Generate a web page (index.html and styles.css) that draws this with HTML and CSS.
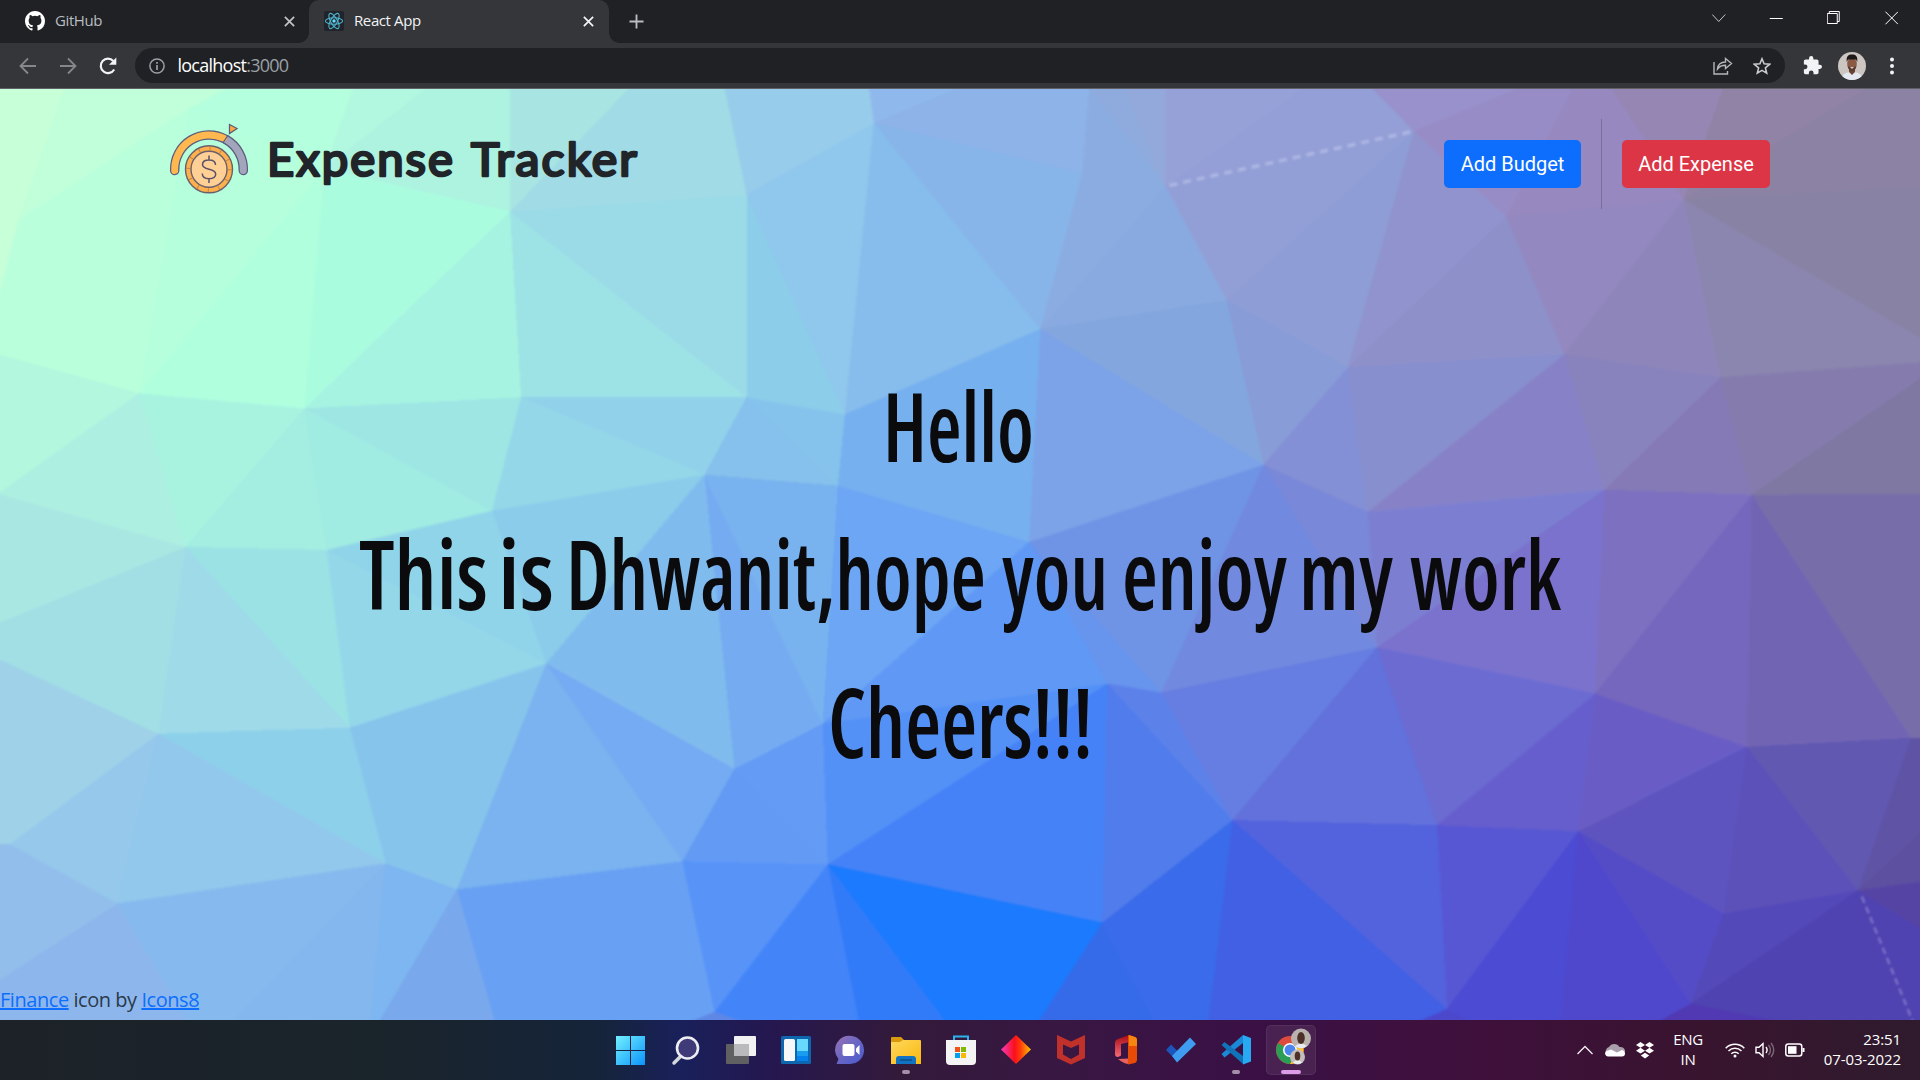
FILE: index.html
```html
<!DOCTYPE html>
<html lang="en">
<head>
<meta charset="utf-8">
<title>React App</title>
<link rel="stylesheet" href="styles.css">
</head>
<body>
<div class="screen">
  <header class="tabs">
    <div class="tab">
      <svg class="fav" viewBox="0 0 16 16"><path fill="#fff" d="M8 0C3.58 0 0 3.58 0 8c0 3.54 2.29 6.53 5.47 7.59.4.07.55-.17.55-.38v-1.49c-2.01.37-2.53-.49-2.69-.94-.09-.23-.48-.94-.82-1.13-.28-.15-.68-.52-.01-.53.63-.01 1.08.58 1.23.82.72 1.21 1.87.87 2.33.66.07-.52.28-.87.51-1.07-1.78-.2-3.64-.89-3.64-3.95 0-.87.31-1.59.82-2.15-.08-.2-.36-1.02.08-2.12 0 0 .67-.21 2.2.82a7.6 7.6 0 0 1 4 0c1.53-1.04 2.2-.82 2.2-.82.44 1.1.16 1.92.08 2.12.51.56.82 1.27.82 2.15 0 3.07-1.87 3.75-3.65 3.95.29.25.54.73.54 1.48v2.2c0 .21.15.46.55.38A8 8 0 0 0 16 8c0-4.42-3.58-8-8-8z"/></svg>
      <span class="tab-title">GitHub</span>
      <svg class="x dim" viewBox="0 0 10 10"><path d="M.8.8l8.4 8.4M9.2.8L.8 9.2"/></svg>
    </div>
    <div class="tab active">
      <svg class="fav" viewBox="0 0 20 20"><rect width="20" height="20" rx="2" fill="#20232a"/><g fill="none" stroke="#4fb3cd" stroke-width="1.1"><ellipse cx="10" cy="10" rx="8.6" ry="3.3"/><ellipse cx="10" cy="10" rx="8.6" ry="3.3" transform="rotate(60 10 10)"/><ellipse cx="10" cy="10" rx="8.6" ry="3.3" transform="rotate(120 10 10)"/></g><circle cx="10" cy="10" r="1.7" fill="#61dafb"/></svg>
      <span class="tab-title">React App</span>
      <svg class="x" viewBox="0 0 10 10"><path d="M.8.8l8.4 8.4M9.2.8L.8 9.2"/></svg>
    </div>
    <svg class="plus" viewBox="0 0 16 16"><path d="M8 .5v15M.5 8h15"/></svg>
    <div class="win">
      <svg viewBox="0 0 14 14"><path stroke="#c4c6ca" d="M.5 3.5l6.5 7 6.5-7"/></svg>
      <svg viewBox="0 0 14 14"><path d="M0 7.5h13"/></svg>
      <svg viewBox="0 0 14 14"><path d="M.5 2.5h10v10H.5zM2.5 2.5v-2h10v10h-2"/></svg>
      <svg viewBox="0 0 14 14"><path d="M.7.7l12.6 12.6M13.300.7L.7 13.300"/></svg>
    </div>
  </header>

  <nav class="toolbar">
    <div class="cell"><svg width="18" height="18" viewBox="0 0 18 18" class="ln" stroke="#85878a"><path d="M17 9H2M9 1.500L1.500 9 9 16.500"/></svg></div>
    <div class="cell"><svg width="18" height="18" viewBox="0 0 18 18" class="ln" stroke="#85878a"><path d="M1 9h15M9 1.500L16.500 9 9 16.500"/></svg></div>
    <div class="cell"><svg width="18" height="18" viewBox="0 0 18 18"><path d="M15.200 12.500A7.200 7.200 0 1 1 14.300 4" fill="none" stroke="#f1f3f4" stroke-width="2.200"/><path d="M17.300.5v7.300H10z" fill="#f1f3f4"/></svg></div>
    <div class="omni">
      <svg width="16" height="16" viewBox="0 0 16 16"><circle cx="8" cy="8" r="7.100" fill="none" stroke="#9aa0a6" stroke-width="1.500"/><path d="M8 7v5M8 4v1.700" stroke="#9aa0a6" stroke-width="1.700"/></svg>
      <span class="url">localhost<i>:3000</i></span>
      <svg class="share" width="20" height="18" viewBox="0 0 20 18" fill="none" stroke="#b4b6b9" stroke-width="1.400"><path d="M1 5v12h13.500v-3M4.500 12C5 7.500 8 5 12.500 5V1.500L18.500 6.500l-6 5V8.300C9 8.300 6.500 9.300 4.500 12z"/></svg>
      <svg width="18" height="18" viewBox="0 0 18 18" fill="none" stroke="#c8cacd" stroke-width="1.600"><path d="M9 1.800l2.100 5 5.500.5-4.200 3.600 1.300 5.300L9 13.400l-4.700 2.800 1.300-5.300L1.400 7.300l5.500-.5z"/></svg>
    </div>
    <div class="cell ext"><svg width="19" height="19" viewBox="1 1 22 22"><path fill="#f1f3f4" d="M20.500 11H19V7c0-1.100-.9-2-2-2h-4V3.500a2.500 2.500 0 0 0-5 0V5H4c-1.100 0-2 .9-2 2v3.800h1.500a2.700 2.700 0 0 1 0 5.400H2V20c0 1.100.9 2 2 2h3.800v-1.500a2.700 2.700 0 0 1 5.400 0V22H17c1.100 0 2-.9 2-2v-4h1.500a2.500 2.500 0 0 0 0-5z"/></svg></div>
    <div class="cell"><svg width="28" height="28" viewBox="0 0 28 28"><defs><clipPath id="av"><circle cx="14" cy="14" r="14"/></clipPath></defs><g clip-path="url(#av)"><rect width="28" height="28" fill="#cdc5c1"/><path d="M3 28c1-6 5-8 11-8s10 2 11 8z" fill="#e4e8f1"/><path d="M11 16h6v4l-3 3-3-3z" fill="#6b4434"/><ellipse cx="14" cy="12" rx="4.800" ry="6.500" fill="#8a5a45"/><path d="M8.800 10C8 4 10.500 2.500 14 2.500s6 1.500 5.200 7.500L18 7.500h-8z" fill="#1d1717"/><path d="M9.500 14c.8 3 2 5 4.500 5s3.700-2 4.500-5l-2 1h-5z" fill="#5a3a2e"/><path d="M12 15.300h4l-2 1.500z" fill="#fff"/></g></svg></div>
    <div class="cell"><svg width="4" height="18" viewBox="0 0 4 18" fill="#f1f3f4"><circle cx="2" cy="2.500" r="2"/><circle cx="2" cy="9" r="2"/><circle cx="2" cy="15.500" r="2"/></svg></div>
  </nav>

  <main class="page">
    <svg class="lowpoly" viewBox="0 89 1920 931" preserveAspectRatio="none">
      <polygon points="0,89 67,89 21,221 0,300" fill="#c6ffd8"/>
      <polygon points="67,89 230,89 190,111 21,221" fill="#c0ffda"/>
      <polygon points="21,221 190,111 141,394 0,355 0,300" fill="#b9ffdb"/>
      <polygon points="230,89 355,89 326,170 190,111" fill="#b4ffdd"/>
      <polygon points="190,111 326,170 141,394" fill="#b6ffdc"/>
      <polygon points="326,170 306,409 141,394" fill="#b0ffdd"/>
      <polygon points="326,170 511,213 306,409" fill="#aafcdf"/>
      <polygon points="511,213 522,398 306,409" fill="#a6f3e1"/>
      <polygon points="355,89 429,89 326,170" fill="#b2f7df"/>
      <polygon points="429,89 511,89 511,213 326,170" fill="#adf3e0"/>
      <polygon points="511,89 631,89 511,213" fill="#a8e5e2"/>
      <polygon points="631,89 725,89 747,196 511,213" fill="#a1dbe6"/>
      <polygon points="511,213 747,196 747,398" fill="#9bdbe7"/>
      <polygon points="511,213 747,398 522,398" fill="#9de3e6"/>
      <polygon points="725,89 869,89 874,125 747,196" fill="#97cceb"/>
      <polygon points="747,196 874,125 845,415" fill="#90c7ec"/>
      <polygon points="747,196 845,415 747,398" fill="#8ccdea"/>
      <polygon points="869,89 960,89 874,125" fill="#8fb9ec"/>
      <polygon points="874,125 960,89 1089,89 1082,175" fill="#8db3e8"/>
      <polygon points="874,125 1040,330 845,415" fill="#86bdec"/>
      <polygon points="874,125 1082,175 1040,330" fill="#87b5ea"/>
      <polygon points="1089,89 1165,188 1040,330 1082,175" fill="#8bace1"/>
      <polygon points="1089,89 1124,89 1165,188" fill="#8fabdd"/>
      <polygon points="1124,89 1165,89 1165,188" fill="#93a9db"/>
      <polygon points="1165,89 1303,89 1165,188" fill="#96a2d7"/>
      <polygon points="1303,89 1370,89 1413,133 1165,188" fill="#949fd7"/>
      <polygon points="1165,188 1413,133 1226,301" fill="#929fd6"/>
      <polygon points="1165,188 1226,301 1040,330" fill="#89aae0"/>
      <polygon points="1370,89 1520,89 1413,133" fill="#9891cb"/>
      <polygon points="1520,89 1572,89 1505,218 1413,133" fill="#978cc6"/>
      <polygon points="1413,133 1505,218 1347,368" fill="#9093cd"/>
      <polygon points="1413,133 1347,368 1226,301" fill="#8e9dd5"/>
      <polygon points="1572,89 1609,89 1682,201 1505,218" fill="#9788bf"/>
      <polygon points="1609,89 1722,89 1682,201" fill="#9586b4"/>
      <polygon points="1722,89 1866,89 1682,201" fill="#9183a5"/>
      <polygon points="1866,89 1920,89 1920,188 1682,201" fill="#8c82a3"/>
      <polygon points="1682,201 1920,188 1920,340" fill="#8883a4"/>
      <polygon points="1682,201 1920,340 1920,365 1719,378" fill="#8a86af"/>
      <polygon points="1682,201 1719,378 1563,355" fill="#8e86ba"/>
      <polygon points="1505,218 1682,201 1563,355" fill="#9388c0"/>
      <polygon points="1505,218 1563,355 1347,368" fill="#8e90ca"/>
      <polygon points="1040,330 1226,301 1263,465" fill="#83a6de"/>
      <polygon points="1226,301 1347,368 1263,465" fill="#889cd8"/>
      <polygon points="1040,330 1263,465 1029,542" fill="#7ca3e8"/>
      <polygon points="1347,368 1367,512 1263,465" fill="#8490d5"/>
      <polygon points="1347,368 1563,355 1367,512" fill="#878fce"/>
      <polygon points="1563,355 1603,490 1367,512" fill="#8782c8"/>
      <polygon points="1563,355 1719,378 1603,490" fill="#8883bd"/>
      <polygon points="1719,378 1750,495 1603,490" fill="#857ab6"/>
      <polygon points="1719,378 1920,363 1920,378 1750,495" fill="#857cad"/>
      <polygon points="1920,378 1920,494 1750,495" fill="#7e78a3"/>
      <polygon points="845,415 1040,330 1029,542 838,486" fill="#77b0ef"/>
      <polygon points="0,355 141,394 0,494" fill="#b2f7de"/>
      <polygon points="141,394 187,547 0,494" fill="#adefe1"/>
      <polygon points="141,394 306,409 187,547" fill="#a8f3e0"/>
      <polygon points="306,409 328,550 187,547" fill="#a3ede1"/>
      <polygon points="306,409 493,511 328,550" fill="#a0ebe2"/>
      <polygon points="306,409 522,398 493,511" fill="#9de6e4"/>
      <polygon points="522,398 747,398 705,475" fill="#91d2ea"/>
      <polygon points="522,398 705,475 493,511" fill="#94d7e8"/>
      <polygon points="747,398 845,415 838,486" fill="#86c3ec"/>
      <polygon points="747,398 838,486 705,475" fill="#86c0ec"/>
      <polygon points="0,494 187,547 0,623" fill="#a9e7e3"/>
      <polygon points="187,547 160,733 0,658 0,623" fill="#a2dfe5"/>
      <polygon points="187,547 351,727 160,733" fill="#9edae8"/>
      <polygon points="187,547 328,550 351,727" fill="#9be2e5"/>
      <polygon points="328,550 547,663 351,727" fill="#93d7e9"/>
      <polygon points="328,550 493,511 547,663" fill="#90d4ea"/>
      <polygon points="493,511 705,475 547,663" fill="#8bccea"/>
      <polygon points="705,475 735,768 547,663" fill="#80bbee"/>
      <polygon points="705,475 823,723 735,768" fill="#75acf1"/>
      <polygon points="705,475 838,486 823,723" fill="#79b3ef"/>
      <polygon points="838,486 1029,542 823,723" fill="#6ca6f4"/>
      <polygon points="1029,542 1107,683 823,723" fill="#6098f5"/>
      <polygon points="0,658 160,733 12,843 0,843" fill="#9fd2e8"/>
      <polygon points="160,733 119,902 12,843" fill="#95c8eb"/>
      <polygon points="160,733 387,862 119,902" fill="#92c8ec"/>
      <polygon points="160,733 351,727 387,862" fill="#8dd0ea"/>
      <polygon points="351,727 547,663 458,888 387,862" fill="#87c4ec"/>
      <polygon points="547,663 683,860 458,888" fill="#7ab3ef"/>
      <polygon points="547,663 735,768 683,860" fill="#74abf2"/>
      <polygon points="735,768 823,723 828,863" fill="#649bf5"/>
      <polygon points="735,768 828,863 683,860" fill="#629af4"/>
      <polygon points="823,723 1107,683 828,863" fill="#5391f7"/>
      <polygon points="0,843 12,843 119,902 0,979" fill="#92beeb"/>
      <polygon points="0,979 119,902 190,1020 0,1020" fill="#8db7ec"/>
      <polygon points="119,902 387,862 233,1020 190,1020" fill="#86b9ee"/>
      <polygon points="387,862 372,1020 233,1020" fill="#83b7ed"/>
      <polygon points="387,862 458,888 380,1020 372,1020" fill="#7db6f0"/>
      <polygon points="458,888 496,1020 380,1020" fill="#79a9ec"/>
      <polygon points="458,888 683,860 715,1010 700,1020 496,1020" fill="#68a0f4"/>
      <polygon points="683,860 828,863 715,1010" fill="#5893f8"/>
      <polygon points="828,863 859,1020 744,1020 715,1010" fill="#4385f8"/>
      <polygon points="828,863 946,1020 859,1020" fill="#327bf8"/>
      <polygon points="828,863 1102,921 1038,1020 946,1020" fill="#1b7afd"/>
      <polygon points="828,863 1107,683 1102,921" fill="#4582f7"/>
      <polygon points="1107,683 1232,819 1102,921" fill="#517ceb"/>
      <polygon points="1107,683 1161,692 1232,819" fill="#5c82ea"/>
      <polygon points="1029,542 1161,692 1107,683" fill="#6794ec"/>
      <polygon points="1029,542 1263,465 1161,692" fill="#6f94e5"/>
      <polygon points="1263,465 1376,647 1161,692" fill="#7189df"/>
      <polygon points="1263,465 1367,512 1376,647" fill="#7988d8"/>
      <polygon points="1367,512 1603,490 1376,647" fill="#7c7fd1"/>
      <polygon points="1603,490 1594,693 1376,647" fill="#7a72cd"/>
      <polygon points="1603,490 1750,495 1594,693" fill="#7d70c0"/>
      <polygon points="1750,495 1745,746 1594,693" fill="#7567bd"/>
      <polygon points="1750,495 1909,737 1745,746" fill="#7165b3"/>
      <polygon points="1750,495 1920,494 1920,737 1909,737" fill="#776ea9"/>
      <polygon points="1161,692 1376,647 1232,819" fill="#667de1"/>
      <polygon points="1376,647 1436,824 1232,819" fill="#6271db"/>
      <polygon points="1376,647 1594,693 1436,824" fill="#6b6bd2"/>
      <polygon points="1594,693 1577,830 1436,824" fill="#665ecc"/>
      <polygon points="1594,693 1745,746 1577,830" fill="#695dc5"/>
      <polygon points="1745,746 1722,912 1577,830" fill="#5e54c0"/>
      <polygon points="1745,746 1856,889 1722,912" fill="#5c50b9"/>
      <polygon points="1745,746 1909,737 1856,889" fill="#6158b2"/>
      <polygon points="1909,737 1920,737 1920,830 1856,889" fill="#5f53a5"/>
      <polygon points="1920,830 1920,880 1856,889" fill="#5d50a0"/>
      <polygon points="1856,889 1920,880 1920,928" fill="#5644a5"/>
      <polygon points="1856,889 1920,928 1920,1020 1689,1020 1689,1002" fill="#4f42b1"/>
      <polygon points="1722,912 1856,889 1689,1002" fill="#5449b9"/>
      <polygon points="1577,830 1722,912 1689,1002" fill="#544cc6"/>
      <polygon points="1577,830 1689,1002 1660,1020 1559,1020" fill="#4f48cd"/>
      <polygon points="1577,830 1559,1020 1460,1020 1446,1007" fill="#4b4bd3"/>
      <polygon points="1436,824 1577,830 1446,1007" fill="#5757d4"/>
      <polygon points="1232,819 1436,824 1446,1007" fill="#5363dd"/>
      <polygon points="1232,819 1446,1007 1425,1020 1208,1020" fill="#4160e4"/>
      <polygon points="1232,819 1208,1020 1155,1020 1102,921" fill="#3a6bea"/>
      <polygon points="1102,921 1155,1020 1038,1020" fill="#356be9"/>
      <polygon points="715,1010 744,1020 690,1020" fill="#5f87e5"/>
      <polygon points="1446,1007 1470,1020 1416,1020" fill="#4b48cc"/>
      <polygon points="1689,1002 1780,1020 1656,1020" fill="#5039b2"/>
      <path class="dash" d="M1169 187L1413 133" stroke-dasharray="8 6"/>
      <path class="dash thin" d="M1860 895L1911 1020" stroke-dasharray="7 4"/>
    </svg>

    <div class="head">
      <svg class="logo" viewBox="168 120 84 78">
        <g fill="none" stroke-linecap="round"><path d="M174.700 170.500A34.300 34.300 0 0 1 226 139.500" stroke="#5c5c7c" stroke-width="9.500"/><path d="M226 139.500A34.300 34.300 0 0 1 243.300 170.500" stroke="#5c5c7c" stroke-width="9.500"/><path d="M226 139.500A34.300 34.300 0 0 1 243.300 170.500" stroke="#a3a5bd" stroke-width="7"/><path d="M174.700 170.500A34.300 34.300 0 0 1 223.500 138.200" stroke="#ffb74f" stroke-width="7"/></g>
        <path d="M227.500 136l-4 6" stroke="#5c5c7c" stroke-width="1.300"/>
        <path d="M229.500 124.500v9l7.500-5z" fill="#ffa940" stroke="#5c5c7c" stroke-width="1.300"/>
        <circle cx="209" cy="169.300" r="23.500" fill="#fdb04b" stroke="#6b5f6d" stroke-width="1.400"/>
        <circle cx="209" cy="169.300" r="20.800" fill="none" stroke="#a5764f" stroke-width="4" stroke-dasharray="1 9.890" opacity=".7"/>
        <circle cx="209" cy="169.300" r="18" fill="#ffd096" stroke="#6b5f6d" stroke-width="1.400"/>
        <path d="M209 155.500v4.500M209 178.500v4.500M215.500 165c0-3-2.500-5-6.500-5s-6.500 1.800-6.500 4.600c0 6.200 13.200 3.200 13.200 9.400 0 2.800-2.700 4.700-6.700 4.700s-6.700-2-6.700-5.200" fill="none" stroke="#5a5165" stroke-width="1.500"/>
      </svg>
      <svg class="brand" viewBox="0 -20 380 90"><text y="37"><tspan x="1" textLength="188" lengthAdjust="spacingAndGlyphs">Expense</tspan> <tspan x="205" textLength="168" lengthAdjust="spacingAndGlyphs">Tracker</tspan></text></svg>
      <button class="btn blue">Add Budget</button>
      <span class="vr"></span>
      <button class="btn red">Add Expense</button>
    </div>

    <svg class="hero" viewBox="0 -20 1220 480">
      <text x="533" y="91.500" textLength="151" lengthAdjust="spacingAndGlyphs">Hello</text>
      <text y="239.500"><tspan x="9" textLength="129" lengthAdjust="spacingAndGlyphs">This</tspan> <tspan x="148" textLength="56" lengthAdjust="spacingAndGlyphs">is</tspan> <tspan x="216" textLength="420" lengthAdjust="spacingAndGlyphs">Dhwanit,hope</tspan> <tspan x="652" textLength="106" lengthAdjust="spacingAndGlyphs">you</tspan> <tspan x="772" textLength="165" lengthAdjust="spacingAndGlyphs">enjoy</tspan> <tspan x="949" textLength="94" lengthAdjust="spacingAndGlyphs">my</tspan> <tspan x="1060" textLength="151" lengthAdjust="spacingAndGlyphs">work</tspan></text>
      <text x="478" y="387.500" textLength="265" lengthAdjust="spacingAndGlyphs">Cheers!!!</text>
    </svg>

    <p class="credit"><a>Finance</a> icon by <a>Icons8</a></p>
  </main>

  <footer class="taskbar">
    <div class="apps">
      <span><svg viewBox="0 0 32 32"><defs><linearGradient id="w" x1="0" y1="0" x2="1" y2="1"><stop offset="0" stop-color="#73f0ff"/><stop offset="1" stop-color="#0a94fb"/></linearGradient></defs><path fill="url(#w)" d="M1 2h14v14H1zM16 2h14v14H16zM1 17h14v14H1zM16 17h14v14H16z"/></svg></span>
      <span><svg viewBox="0 0 32 32"><path d="M12 21l-8 8" stroke="#d5d8dc" stroke-width="3.500" stroke-linecap="round"/><circle cx="17.500" cy="14" r="10.500" fill="#3f3b78" stroke="#eceef1" stroke-width="2.600"/></svg></span>
      <span><svg viewBox="0 0 32 32"><rect x="1" y="10" width="23" height="20" rx="1" fill="#606063"/><rect x="9" y="2" width="22" height="20" rx="1" fill="#f1f1f2"/><path d="M9 10h15v12H9z" fill="#bababc"/></svg></span>
      <span><svg viewBox="0 0 32 32"><rect x="1" y="2" width="30" height="28" rx="1.500" fill="#0d66ae"/><rect x="4" y="5" width="11" height="22" rx="1.500" fill="#f5f7f9"/><path d="M17 5h11v12H17z" fill="#69d8ff"/><path d="M17 17h11v5H17z" fill="#199dee"/><path d="M17 22h11v5H17z" fill="#0581ed"/></svg></span>
      <span><svg viewBox="0 0 32 32"><defs><linearGradient id="ch" x1="0" y1="0" x2="1" y2="1"><stop offset="0" stop-color="#9c72b2"/><stop offset=".5" stop-color="#6766c4"/><stop offset="1" stop-color="#4a59cf"/></linearGradient></defs><path fill="url(#ch)" d="M16.500 2a14 14 0 1 1-3 28H1.500l2-5A14 14 0 0 1 16.500 2z"/><rect x="7.500" y="10" width="12" height="12" rx="2" fill="#fff"/><path d="M21 14.500l3.500-3.500v10L21 17.500z" fill="#fff"/></svg></span>
      <span class="run"><svg viewBox="0 0 32 32"><defs><linearGradient id="fo" x1="0" y1="0" x2="1" y2="1"><stop offset="0" stop-color="#ffd85c"/><stop offset="1" stop-color="#f9b80f"/></linearGradient></defs><path d="M1 4q0-1 1-1h9l3 3-3 5H1z" fill="#d99a0e"/><path d="M1 8h9l3-2h17q1 0 1 1v23H1z" fill="url(#fo)"/><path d="M6 30v-5q0-3 3-3h14q3 0 3 3v5z" fill="#1173c2"/><path d="M10 26h12" stroke="#0b4d8c" stroke-width="1.500"/></svg></span>
      <span><svg viewBox="0 0 32 32"><path d="M9 7V2.500h14V7" fill="none" stroke="#2ab4ee" stroke-width="2"/><path d="M1 6h30v21q0 4-4 4H5q-4 0-4-4z" fill="#f4f4f5"/><path d="M10 13h5v5h-5z" fill="#f1511b"/><path d="M16 13h5v5h-5z" fill="#80b900"/><path d="M10 19h5v5h-5z" fill="#00a1f1"/><path d="M16 19h5v5h-5z" fill="#fbb900"/></svg></span>
      <span><svg viewBox="0 0 32 32"><defs><linearGradient id="di"><stop offset="0" stop-color="#f53cc0"/><stop offset=".45" stop-color="#f9101b"/><stop offset=".65" stop-color="#ff3b0c"/><stop offset="1" stop-color="#ffc400"/></linearGradient></defs><path d="M16 1l15 14.500L16 30 1 15.500z" fill="url(#di)"/></svg></span>
      <span><svg viewBox="0 0 32 32"><path d="M2 1l14 6.500L30 1v23l-14 6.500L2 24zM8 10.500v10L16 25l8-4.500v-10L16 14z" fill="#c0312c" fill-rule="evenodd"/></svg></span>
      <span><svg viewBox="0 0 32 32"><defs><linearGradient id="of" x1="0" y1="0" x2="0" y2="1"><stop offset="0" stop-color="#a80c16"/><stop offset="1" stop-color="#f56a76"/></linearGradient></defs><path d="M19 1L8 5q-3 1-3 4v11q0 3 3 3l3-1.500V10l8-2z" fill="url(#of)"/><path d="M8 25l11-.5V30q-5 0-11-5z" fill="#e8625f"/><path d="M18 1l7 2q2 .6 2 3v20q0 2-2 3l-7 1.500z" fill="#e74b05"/><path d="M19 1l6 2q2 .6 2 3v6h-8z" fill="#f6860f"/></svg></span>
      <span><svg viewBox="0 0 32 32"><path d="M1 16l5-5.500 10 10L12 27z" fill="#1c56bc"/><path d="M7 22L25 3.500 31 10 12 28.500z" fill="#3e9df0"/></svg></span>
      <span class="run"><svg viewBox="0 0 32 32"><path d="M23 1L1.500 20l3 3.500L23 9z" fill="#1a8ad6"/><path d="M23 30L1.500 11l3-3L23 22z" fill="#1173b8"/><path d="M23 1l8 3v23.500l-8 3z" fill="#27aaf2"/></svg></span>
      <span class="run on"><svg viewBox="0 0 38 38"><circle cx="16" cy="22" r="14" fill="#dd4b3e"/><path d="M4 15a14 14 0 0 0 12 21l6-10-6-4z" fill="#2a9d56"/><path d="M16 36a14 14 0 0 0 13-18H17l5 8z" fill="#fbc52b"/><circle cx="16" cy="22" r="7" fill="#fff"/><circle cx="16" cy="22" r="5.500" fill="#4a86ee"/><circle cx="27" cy="10.500" r="10" fill="#b9b2ae"/><path d="M21 18q6-5 12 0-6 4.500-12 0z" fill="#e8ebef"/><ellipse cx="27" cy="10" rx="3.800" ry="6" fill="#4d3128"/><circle cx="23.500" cy="29" r="7.500" fill="#c5bfbb"/><path d="M19 34.500q4.500-5 9 0-4.500 3-9 0z" fill="#eceef2"/><ellipse cx="23.500" cy="28" rx="2.800" ry="4.500" fill="#4d3128"/></svg></span>
    </div>
    <div class="tray">
      <svg width="16" height="16" viewBox="0 0 16 16"><path d="M.5 12L8 4.500l7.500 7.500" fill="none" stroke="#f2eef2" stroke-width="1.300"/></svg>
      <svg class="cloud" width="20" height="14" viewBox="0 0 20 14"><path d="M2 11.500A4.500 4.500 0 0 1 4 4a6 6 0 0 1 10.500 0A4.600 4.600 0 0 1 20 9z" fill="#a99eab"/><path d="M3.500 13.500A3 3 0 0 1 1.500 8L6 6.500l6 3 5-2.500q3 1 3 3.500 0 3-3 3z" fill="#fff"/></svg>
      <svg class="dbx" width="18" height="17" viewBox="0 0 18 17" fill="#fff"><path d="M4.500 0L9 2.900 4.500 5.800 0 2.900zM13.500 0L18 2.900l-4.500 2.900L9 2.900zM4.500 5.800L9 8.700l-4.500 2.900L0 8.700zM13.500 5.800L18 8.700l-4.500 2.900L9 8.700zM9 10.800l4.200 2.800L9 16.500l-4.200-2.900z"/></svg>
      <div class="lang">ENG<br>IN</div>
      <svg class="wifi" width="20" height="16" viewBox="0 0 20 16" fill="none" stroke="#fff" stroke-width="1.500"><path d="M.7 6.200a13 13 0 0 1 18.600 0M3.500 9a9.200 9.200 0 0 1 13 0M6.300 11.800a5.200 5.200 0 0 1 7.400 0"/><circle cx="10" cy="14" r="1.500" fill="#fff" stroke="none"/></svg>
      <svg class="vol" width="20" height="18" viewBox="0 0 20 18" fill="none" stroke="#fff" stroke-width="1.400"><path d="M1 6.200h3L8 2.500v13L4 11.800H1zM11 6q2.200 3 0 6"/><path d="M13.500 4q4 5 0 10M16 2q5.500 7 0 14" opacity=".35"/></svg>
      <svg class="bat" width="20" height="14" viewBox="0 0 20 14"><rect x=".8" y="1" width="16" height="12" rx="2.500" fill="none" stroke="#fff" stroke-width="1.500"/><rect x="3" y="3.200" width="8.500" height="7.600" fill="#fff"/><path d="M18.500 5v4" stroke="#fff" stroke-width="2"/></svg>
      <div class="clock">23:51<br>07-03-2022</div>
    </div>
  </footer>
</div>
</body>
</html>
```

FILE: styles.css
```css
* { box-sizing: border-box; }
body { margin: 0; font-family: "Open Sans", "Noto Sans", sans-serif; }
svg { display: block; flex: none; }
.screen { width: 1920px; height: 1080px; overflow: hidden; display: flex; flex-direction: column; }

.tabs { height: 43px; background: #202124; display: flex; align-items: center; }
.tab { height: 43px; width: 309px; padding: 0 14px 1px 25px; display: flex; align-items: center; color: #b9bcc1; }
.tab.active { position: relative; width: 300px; padding: 0 15px 1px; background: #35363a; border-radius: 10px 10px 0 0; color: #f1f3f4; }
.tab.active::before, .tab.active::after { content: ""; position: absolute; bottom: 0; width: 10px; height: 10px; }
.tab.active::before { left: -10px; background: radial-gradient(circle at 0 0, transparent 9.500px, #35363a 10px); }
.tab.active::after { right: -10px; background: radial-gradient(circle at 100% 0, transparent 9.500px, #35363a 10px); }
.fav { width: 20px; height: 20px; }
.tab-title { flex: 1; margin-left: 10px; padding-bottom: 2px; font-size: 15px; letter-spacing: -0.4px; line-height: 20px; }
.x { width: 11px; height: 11px; fill: none; stroke: #f1f3f4; stroke-width: 1.600; }
.x.dim { stroke: #c0c2c6; }
.plus { width: 15px; height: 15px; margin-left: 20px; fill: none; stroke: #b9bcc1; stroke-width: 2; }
.win { margin-left: auto; display: flex; height: 36px; align-self: flex-start; }
.win svg { width: 57.500px; height: 36px; padding: 11px 21.750px; fill: none; stroke: #fff; stroke-width: 1; }

.toolbar { height: 46px; background: #35363a; border-bottom: 1px solid #606166; display: flex; align-items: center; padding-left: 8px; }
.cell { width: 40px; display: flex; justify-content: center; }
.ln { fill: none; stroke-width: 1.800; }
.omni { width: 1650px; height: 35px; margin: 0 7px; border-radius: 18px; background: #202124; display: flex; align-items: center; padding: 0 14px; }
.url { flex: 1; margin-left: 12.500px; padding-bottom: 2px; font-size: 18px; letter-spacing: -0.750px; line-height: 24px; color: #fff; }
.url i { font-style: normal; color: #9aa0a6; }
.share { margin-right: 20px; }

.page { position: relative; z-index: 0; height: 931px; overflow: hidden; display: flex; flex-direction: column; }
.lowpoly { position: absolute; left: -2px; top: -2px; width: 1924px; height: 935px; z-index: -1; shape-rendering: crispEdges; filter: blur(0.8px); }
.dash { stroke: #b9c0e8; stroke-width: 3.500; stroke-opacity: .7; shape-rendering: auto; }
.dash.thin { stroke: #8f85d2; stroke-width: 2.500; }
.head { height: 121px; padding: 29px 150px 0 168px; display: flex; align-items: center; }
.logo { width: 84px; height: 78px; margin-bottom: 10px; }
.brand { width: 380px; height: 90px; margin-left: 14px; margin-right: auto; font-family: Lato, sans-serif; font-size: 46px; font-weight: 400; letter-spacing: 2px; fill: #212529; stroke: #212529; stroke-width: 2.600; stroke-linejoin: round; }
.btn { height: 48px; border: 0; border-radius: 5px; color: #fff; font: 400 20px/30px Roboto, sans-serif; padding: 0; }
.blue { width: 137px; background: #0d6efd; }
.red { width: 148px; background: #dc3545; }
.vr { width: 1px; height: 90px; margin: 0 20px; background: #7b6c9c; }
.hero { width: 1220px; height: 480px; margin: 140px auto 0; font-family: "Open Sans", sans-serif; font-stretch: 75%; font-weight: 560; font-size: 95px; fill: #0b0b0d; overflow: visible; }
.credit { margin: auto 0 5px; font-size: 20px; line-height: 30px; letter-spacing: -0.450px; color: #2b3a4a; }
.credit a { color: #0d6efd; text-decoration: underline; }

.taskbar { height: 60px; display: flex; align-items: center; background: linear-gradient(90deg, #1c2228 0, #1a242b 380px, #15243a 600px, #19205a 680px, #25174f 770px, #331a3a 900px, #381742 1060px, #3a1045 1250px, #3e103b 1480px, #38142f 1700px, #2f1b2d 1920px); }
.apps { display: flex; margin-left: 603px; }
.apps span { width: 55px; height: 60px; display: flex; flex-direction: column; align-items: center; padding-top: 14px; position: relative; }
.apps svg { width: 32px; height: 32px; }
.run::after { content: ""; position: absolute; bottom: 6px; width: 8px; height: 4px; border-radius: 2px; background: #a58fa8; }
.apps .on { width: 50px; height: 50px; margin: 5px 0 0 3px; border-radius: 5px; background: #ffffff14; border: 1px solid #ffffff10; padding-top: 2px; }
.apps .on svg { width: 38px; height: 38px; margin-left: 3px; }
.on::after { width: 20px; bottom: 0; background: #dd9be8; }
.tray { margin-left: auto; display: flex; align-items: center; padding-right: 19px; color: #fff; font-size: 15px; line-height: 20px; height: 60px; }
.cloud { margin-left: 12px; }
.dbx { margin-left: 11px; }
.lang, .clock { padding-bottom: 2px; }
.lang { width: 40px; margin-left: 14px; text-align: center; letter-spacing: -0.3px; }
.wifi { margin-left: 17px; }
.vol { margin-left: 10px; }
.bat { margin-left: 10px; }
.clock { margin-left: 16px; width: 80px; text-align: right; letter-spacing: -0.1px; }
```
